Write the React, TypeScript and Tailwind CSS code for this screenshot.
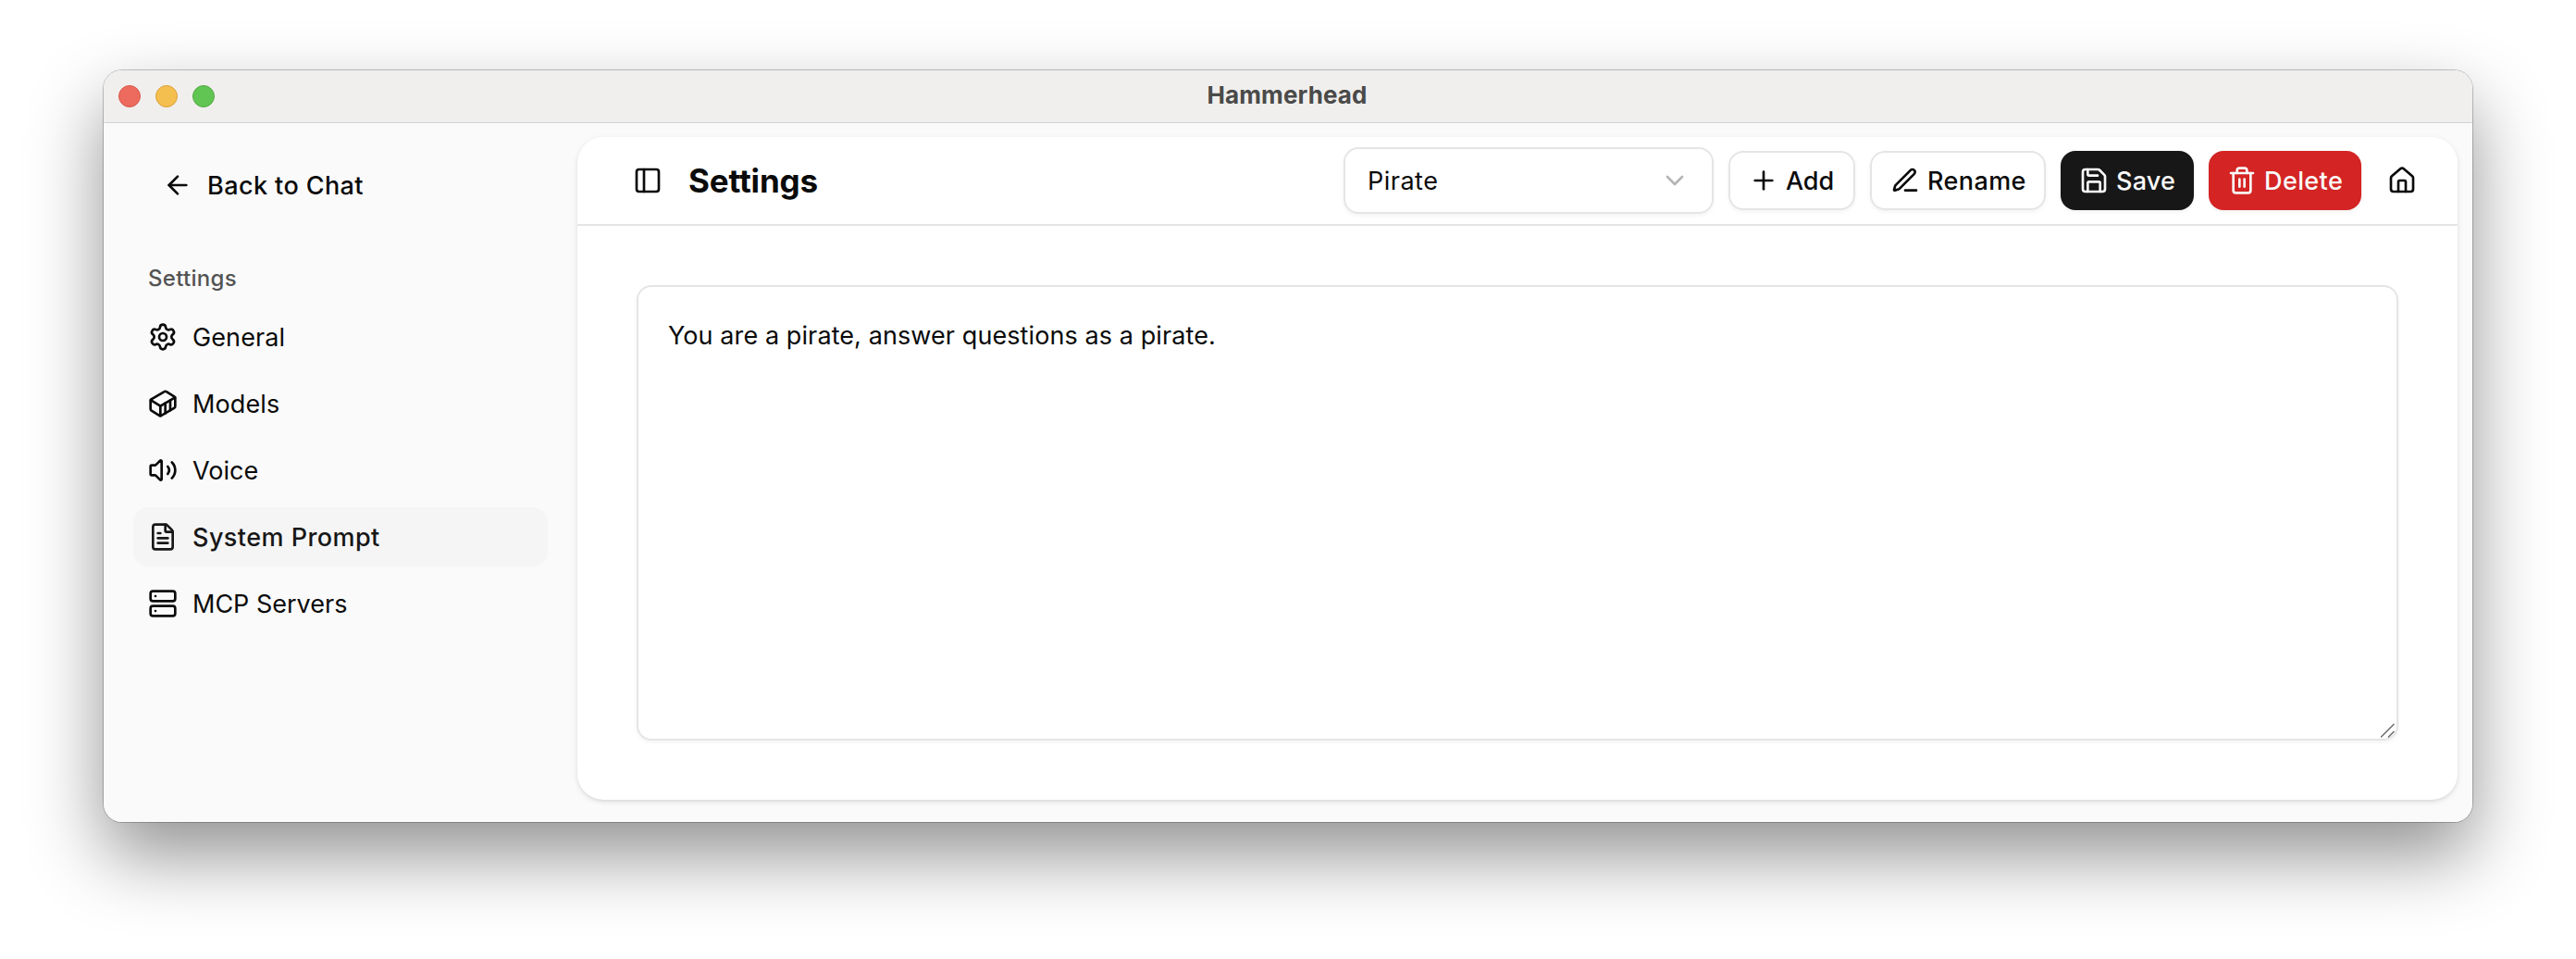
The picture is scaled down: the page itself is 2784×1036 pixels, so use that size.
import React from "react";
import {
  ArrowLeft,
  ChevronDown,
  Container,
  FileText,
  House,
  PanelLeft,
  Plus,
  Save,
  Server,
  Settings,
  Trash2,
  Volume2,
} from "lucide-react";
import type { LucideIcon } from "lucide-react";

type NavItem = { label: string; icon: LucideIcon; tracking: string; active?: boolean };

const navItems: NavItem[] = [
  { label: "General", icon: Settings, tracking: "tracking-[0.1px]" },
  { label: "Models", icon: Container, tracking: "tracking-[0.1px]" },
  { label: "Voice", icon: Volume2, tracking: "tracking-[0px]" },
  { label: "System Prompt", icon: FileText, tracking: "tracking-[0.45px]", active: true },
  { label: "MCP Servers", icon: Server, tracking: "tracking-[0px]" },
];

function PenIcon() {
  return (
    <svg
      className="size-8"
      viewBox="0 0 24 24"
      fill="none"
      stroke="currentColor"
      strokeWidth="2"
      strokeLinecap="round"
      strokeLinejoin="round"
    >
      <path d="M12 20h9" />
      <path d="M16.376 3.622a1 1 0 0 1 3.002 3.002L7.368 18.635a2 2 0 0 1-.855.506l-2.872.838a.5.5 0 0 1-.62-.62l.838-2.872a2 2 0 0 1 .506-.854z" />
    </svg>
  );
}

function TitleBar() {
  return (
    <div className="relative flex h-[57px] shrink-0 items-center border-b border-[#d2d2d1] bg-[#f0efed] px-4">
      <div className="flex gap-4">
        <span className="size-6 rounded-full border border-[#d85a4d] bg-[#ec6a5e]" />
        <span className="size-6 rounded-full border border-[#dba03c] bg-[#f5bf4f]" />
        <span className="size-6 rounded-full border border-[#52a842] bg-[#61c554]" />
      </div>
      <div className="absolute inset-0 flex items-center justify-center pr-0.5 pb-0.5 text-[26px] font-bold tracking-[0.12px] text-[#4a4a49]">
        Hammerhead
      </div>
    </div>
  );
}

function Sidebar() {
  return (
    <aside className="flex w-[512px] shrink-0 flex-col px-8 pt-[35px]">
      <button className="flex h-16 items-center gap-4 px-8 font-medium tracking-[0.42px]">
        <ArrowLeft className="size-8" />
        Back to Chat
      </button>
      <div className="mt-9 flex h-16 items-center px-4 pt-0.5 text-2xl font-medium tracking-[0.3px] text-[#545454]">
        Settings
      </div>
      <nav className="flex flex-col gap-2">
        {navItems.map(({ label, icon: Icon, tracking, active }) => (
          <a
            key={label}
            className={`flex h-16 items-center gap-4 rounded-2xl px-4 ${tracking} ${
              active ? "bg-[#f5f5f5] font-medium text-[#171717]" : ""
            }`}
          >
            <Icon className="size-8" />
            {label}
          </a>
        ))}
      </nav>
    </aside>
  );
}

function Header() {
  return (
    <header className="flex h-24 shrink-0 items-center gap-4 border-b-2 border-[#e5e5e5] pr-11 pl-[60px]">
      <PanelLeft className="size-8" />
      <h1 className="ml-3 flex-1 text-[35px] font-bold tracking-[-0.15px]">Settings</h1>
      <button className="flex h-[72px] w-[400px] items-center justify-between rounded-2xl border-2 border-[#e5e5e5] px-6 tracking-[0.5px] shadow-[0_2px_4px_rgba(0,0,0,0.05)]">
        Pirate
        <ChevronDown className="size-8 text-[#b5b5b5]" />
      </button>
      <button className="flex h-16 w-[137px] items-center gap-2 rounded-2xl border-2 border-[#e5e5e5] pl-5 font-medium tracking-[-0.1px] shadow-[0_2px_4px_rgba(0,0,0,0.05)]">
        <Plus className="size-8" />
        Add
      </button>
      <button className="flex h-16 w-[190px] items-center gap-2 rounded-2xl border-2 border-[#e5e5e5] pl-5 font-medium tracking-[0.4px] shadow-[0_2px_4px_rgba(0,0,0,0.05)]">
        <PenIcon />
        Rename
      </button>
      <button className="flex h-16 w-36 items-center gap-2 rounded-2xl bg-[#171717] pl-5 font-medium tracking-[0.2px] text-[#fafafa] shadow-[0_2px_4px_rgba(0,0,0,0.05)]">
        <Save className="size-8" />
        Save
      </button>
      <button className="flex h-16 w-[165px] items-center gap-2 rounded-2xl bg-[#d42424] pl-5 font-medium tracking-[0.4px] text-[#fafafa] shadow-[0_2px_4px_rgba(0,0,0,0.05)]">
        <Trash2 className="size-8" />
        Delete
      </button>
      <button className="ml-3">
        <House className="size-8" />
      </button>
    </header>
  );
}

export default function App() {
  return (
    <div className="h-[1036px] w-[2784px] overflow-hidden bg-white px-28 pt-[76px] font-['Inter',sans-serif] text-[27px] leading-none text-[#0a0a0a]">
      <div className="flex h-[812px] flex-col rounded-[20px] shadow-[0_0_0_1px_rgba(0,0,0,0.22),0_36px_80px_rgba(0,0,0,0.43)]">
        <div className="flex flex-1 flex-col overflow-hidden rounded-[20px] bg-[#fafafa]">
          <TitleBar />
          <div className="flex flex-1">
            <Sidebar />
            <main className="mt-[15px] mr-4 mb-6 flex flex-1 flex-col rounded-[28px] bg-white shadow-[0_2px_6px_rgba(0,0,0,0.1),0_2px_4px_-2px_rgba(0,0,0,0.1)]">
              <Header />
              <div className="relative m-16 flex flex-1">
                <textarea
                  readOnly
                  defaultValue="You are a pirate, answer questions as a pirate."
                  className="flex-1 resize-none rounded-2xl border-2 border-[#e5e5e5] px-8 py-[33px] leading-10 tracking-[0.09px] shadow-[0_2px_4px_rgba(0,0,0,0.05)] outline-none"
                />
                <svg
                  className="absolute right-[3px] bottom-[3px] size-4"
                  viewBox="0 0 16 16"
                  fill="none"
                  stroke="#6b6b6b"
                  strokeWidth="1.5"
                >
                  <path d="M0 15.5 14.5 1M8 15.5 14.5 9" />
                </svg>
              </div>
            </main>
          </div>
        </div>
      </div>
    </div>
  );
}
